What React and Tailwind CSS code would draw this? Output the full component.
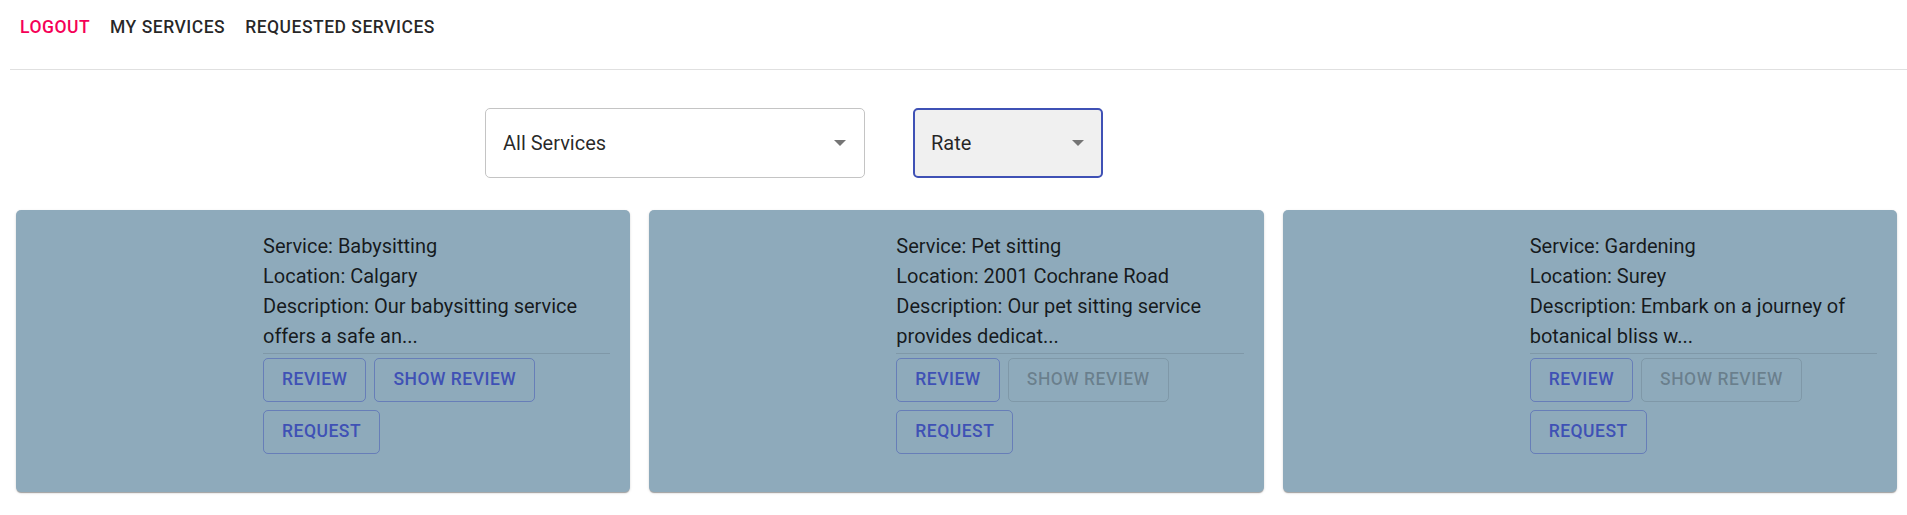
import { useState } from 'react';

const services = [
  {
    id: 1,
    service: 'Babysitting',
    location: 'Calgary',
    description: 'Our babysitting service offers a safe an...',
    hasReviews: true,
  },
  {
    id: 2,
    service: 'Pet sitting',
    location: '2001 Cochrane Road',
    description: 'Our pet sitting service provides dedicat...',
    hasReviews: false,
  },
  {
    id: 3,
    service: 'Gardening',
    location: 'Surey',
    description: 'Embark on a journey of botanical bliss w...',
    hasReviews: false,
  },
];

function Arrow() {
  return (
    <svg width="12" height="6" viewBox="0 0 10 5" className="shrink-0">
      <path d="M0 0l5 5 5-5z" fill="#757575" />
    </svg>
  );
}

function OutlinedButton({ children, disabled }) {
  return (
    <button
      disabled={disabled}
      className={
        disabled
          ? 'h-[44px] px-[18px] rounded-[5px] border border-black/10 text-black/25 text-[17.5px] font-medium tracking-[0.5px] uppercase leading-none'
          : 'h-[44px] px-[18px] rounded-[5px] border border-[#3f51b5]/50 text-[#3f51b5] text-[17.5px] font-medium tracking-[0.5px] uppercase leading-none'
      }
    >
      {children}
    </button>
  );
}

function ServiceCard({ item }) {
  return (
    <div className="bg-[#8eaabb] rounded-[5px] shadow-[0_2px_1px_-1px_rgba(0,0,0,0.2),0_1px_1px_0_rgba(0,0,0,0.14),0_1px_3px_0_rgba(0,0,0,0.12)] h-[282px] pl-[247px] pr-[20px] pt-[21px]">
      <div className="text-[20px] leading-[30px] text-black/85">
        <p>Service: {item.service}</p>
        <p>Location: {item.location}</p>
        <p>Description: {item.description}</p>
      </div>
      <div className="mt-[2px] border-t border-black/10" />
      <div className="mt-[4px] flex flex-wrap gap-[8px]">
        <OutlinedButton>Review</OutlinedButton>
        <OutlinedButton disabled={!item.hasReviews}>Show Review</OutlinedButton>
        <OutlinedButton>Request</OutlinedButton>
      </div>
    </div>
  );
}

export default function App() {
  const [category] = useState('All Services');
  const [sort] = useState('Rate');

  return (
    <div className="min-h-[515px] bg-white font-['Roboto',sans-serif] text-black/85">
      <nav className="ml-[10px] h-[70px] border-b border-[#e0e0e0] flex items-start pt-[4px]">
        <button className="px-[10px] py-[7.5px] text-[17.5px] leading-[1.75] font-medium tracking-[0.5px] uppercase text-[#f50057]">
          Logout
        </button>
        <button className="px-[10px] py-[7.5px] text-[17.5px] leading-[1.75] font-medium tracking-[0.5px] uppercase text-black/85">
          My Services
        </button>
        <button className="px-[10px] py-[7.5px] text-[17.5px] leading-[1.75] font-medium tracking-[0.5px] uppercase text-black/85">
          Requested Services
        </button>
      </nav>

      <div className="flex gap-[48px] pl-[485px] pt-[38px]">
        <div className="w-[380px] h-[70px] rounded-[5px] border border-[#c4c4c4] flex items-center justify-between pl-[17px] pr-[18px] text-[20px]">
          <span>{category}</span>
          <Arrow />
        </div>
        <div className="w-[190px] h-[70px] rounded-[5px] border-2 border-[#3f51b5] bg-[#f0f0f0] flex items-center justify-between pl-[16px] pr-[17px] text-[20px]">
          <span>{sort}</span>
          <Arrow />
        </div>
      </div>

      <div className="grid grid-cols-3 gap-[19px] pl-[16px] pr-[10px] pt-[32px]">
        {services.map(item => (
          <ServiceCard key={item.id} item={item} />
        ))}
      </div>
    </div>
  );
}
